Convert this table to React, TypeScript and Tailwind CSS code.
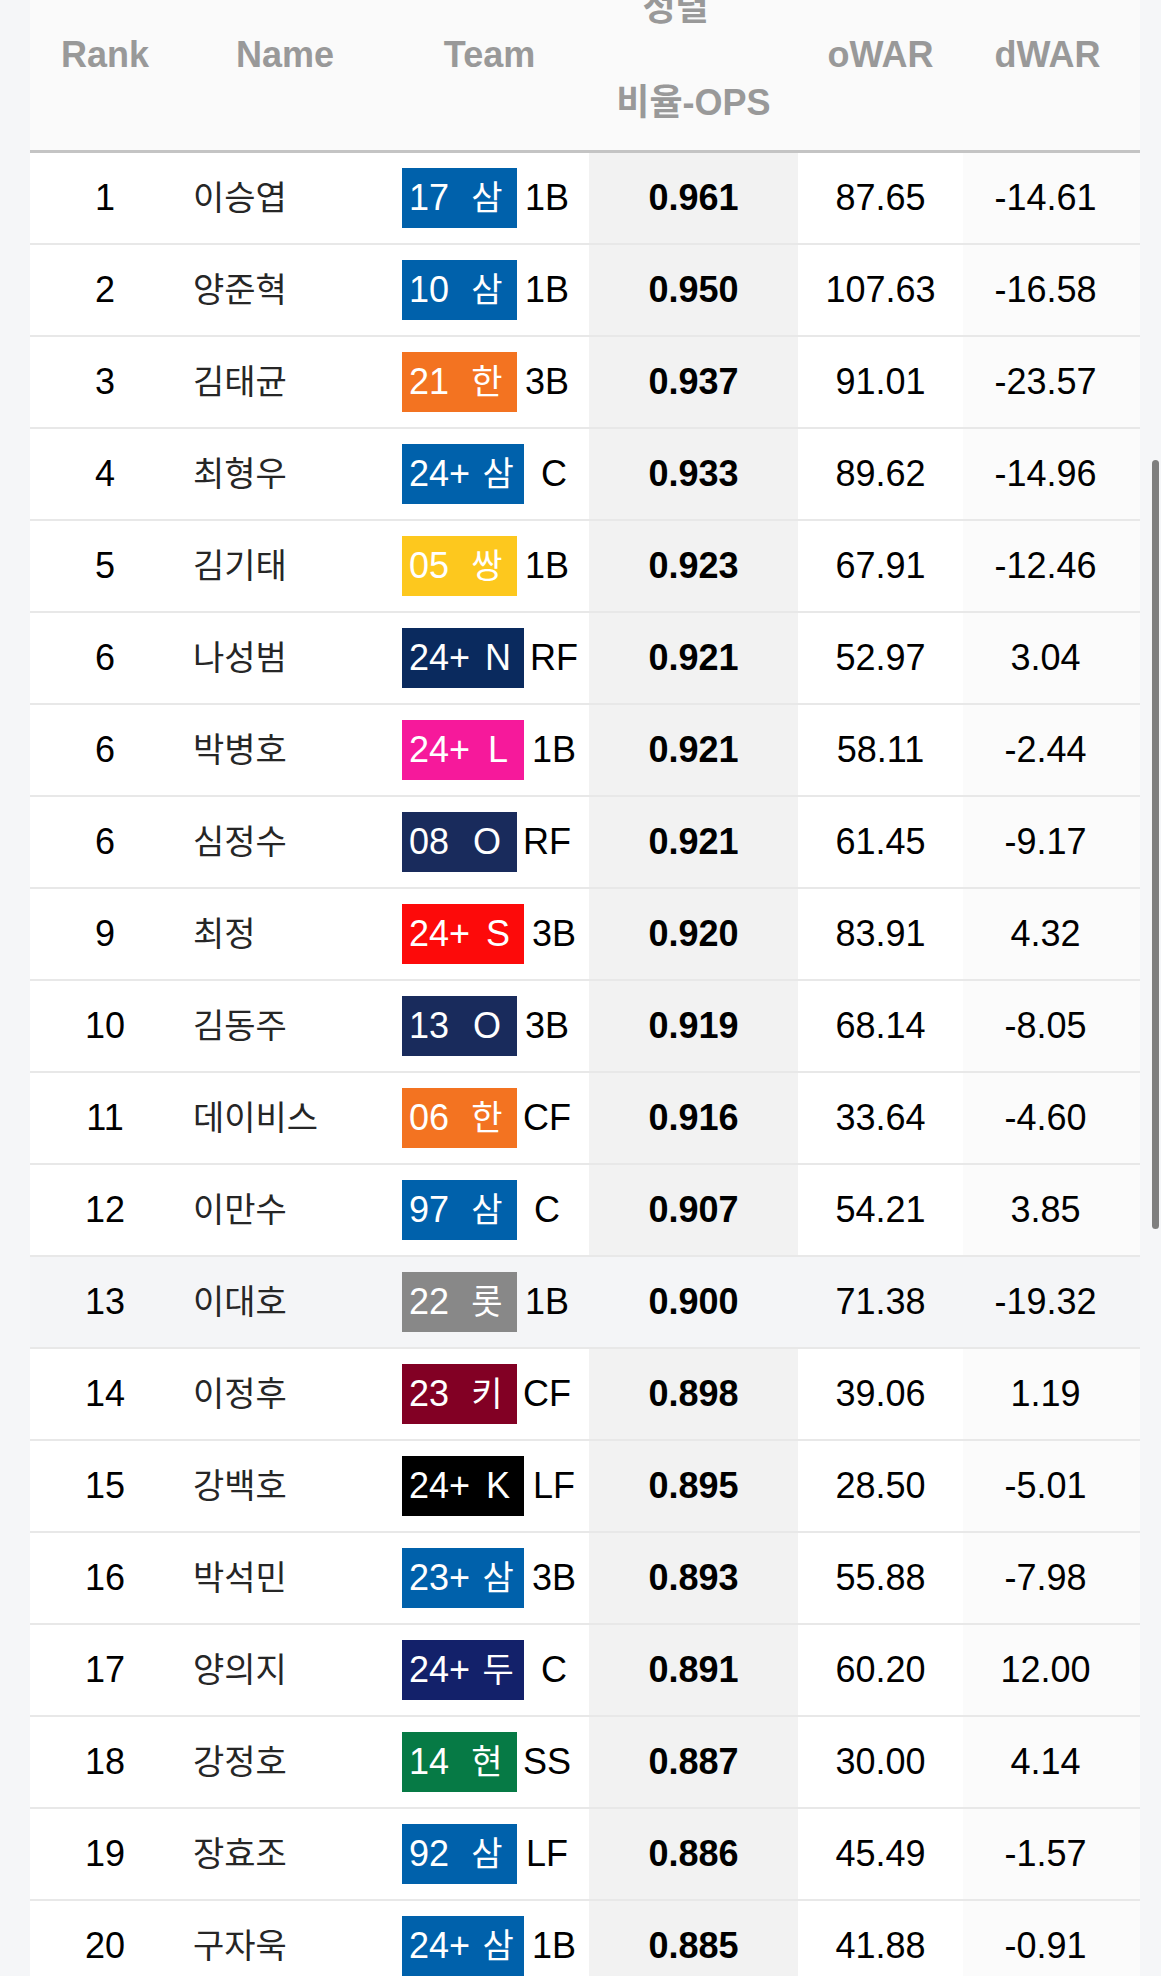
import React from 'react'

type Row = {
  rank: number
  name: string
  year: string
  team: string
  color: string
  pos: string
  ops: string
  owar: string
  dwar: string
  hover?: boolean
}

const SAM = 'bg-[#0061ab]'
const HAN = 'bg-[#f37321]'

const rows: Row[] = [
  { rank: 1, name: '이승엽', year: '17', team: '삼', color: SAM, pos: '1B', ops: '0.961', owar: '87.65', dwar: '-14.61' },
  { rank: 2, name: '양준혁', year: '10', team: '삼', color: SAM, pos: '1B', ops: '0.950', owar: '107.63', dwar: '-16.58' },
  { rank: 3, name: '김태균', year: '21', team: '한', color: HAN, pos: '3B', ops: '0.937', owar: '91.01', dwar: '-23.57' },
  { rank: 4, name: '최형우', year: '24+', team: '삼', color: SAM, pos: 'C', ops: '0.933', owar: '89.62', dwar: '-14.96' },
  { rank: 5, name: '김기태', year: '05', team: '쌍', color: 'bg-[#fdc81e]', pos: '1B', ops: '0.923', owar: '67.91', dwar: '-12.46' },
  { rank: 6, name: '나성범', year: '24+', team: 'N', color: 'bg-[#0a2a5e]', pos: 'RF', ops: '0.921', owar: '52.97', dwar: '3.04' },
  { rank: 6, name: '박병호', year: '24+', team: 'L', color: 'bg-[#f6199b]', pos: '1B', ops: '0.921', owar: '58.11', dwar: '-2.44' },
  { rank: 6, name: '심정수', year: '08', team: 'O', color: 'bg-[#192b5c]', pos: 'RF', ops: '0.921', owar: '61.45', dwar: '-9.17' },
  { rank: 9, name: '최정', year: '24+', team: 'S', color: 'bg-[#fd0a0a]', pos: '3B', ops: '0.920', owar: '83.91', dwar: '4.32' },
  { rank: 10, name: '김동주', year: '13', team: 'O', color: 'bg-[#192b5c]', pos: '3B', ops: '0.919', owar: '68.14', dwar: '-8.05' },
  { rank: 11, name: '데이비스', year: '06', team: '한', color: HAN, pos: 'CF', ops: '0.916', owar: '33.64', dwar: '-4.60' },
  { rank: 12, name: '이만수', year: '97', team: '삼', color: SAM, pos: 'C', ops: '0.907', owar: '54.21', dwar: '3.85' },
  { rank: 13, name: '이대호', year: '22', team: '롯', color: 'bg-[#888888]', pos: '1B', ops: '0.900', owar: '71.38', dwar: '-19.32', hover: true },
  { rank: 14, name: '이정후', year: '23', team: '키', color: 'bg-[#820024]', pos: 'CF', ops: '0.898', owar: '39.06', dwar: '1.19' },
  { rank: 15, name: '강백호', year: '24+', team: 'K', color: 'bg-black', pos: 'LF', ops: '0.895', owar: '28.50', dwar: '-5.01' },
  { rank: 16, name: '박석민', year: '23+', team: '삼', color: SAM, pos: '3B', ops: '0.893', owar: '55.88', dwar: '-7.98' },
  { rank: 17, name: '양의지', year: '24+', team: '두', color: 'bg-[#13216a]', pos: 'C', ops: '0.891', owar: '60.20', dwar: '12.00' },
  { rank: 18, name: '강정호', year: '14', team: '현', color: 'bg-[#067a45]', pos: 'SS', ops: '0.887', owar: '30.00', dwar: '4.14' },
  { rank: 19, name: '장효조', year: '92', team: '삼', color: SAM, pos: 'LF', ops: '0.886', owar: '45.49', dwar: '-1.57' },
  { rank: 20, name: '구자욱', year: '24+', team: '삼', color: SAM, pos: '1B', ops: '0.885', owar: '41.88', dwar: '-0.91' },
]

const cols = 'grid grid-cols-[150px_210px_199px_209px_165px_177px]'

const TeamBadge: React.FC<{ row: Row }> = ({ row }) => {
  const korean = /[가-힣]/.test(row.team)
  return (
    <span className={`${row.color} flex h-[60px] min-w-[115px] items-center pl-[7px] pr-[8px] text-white`}>
      <span className="min-w-[50px]">{row.year}</span>
      <span className={`ml-[10px] w-[36px] text-center ${korean ? 'text-[34px]' : ''}`}>{row.team}</span>
    </span>
  )
}

export default function App() {
  return (
    <div
      className="min-h-screen overflow-hidden bg-[#f5f6f8] pl-[30px]"
      style={{ fontFamily: '"Liberation Sans", "Noto Sans CJK KR", sans-serif' }}
    >
      <div className="-mt-[40px] w-[1110px] bg-white text-[36px] text-black">
        {/* Header */}
        <div className={`${cols} h-[193px] items-center border-b-[3px] border-[#c4c4c4] bg-[#fafafa] font-bold text-[#999999]`}>
          <div className="text-center">Rank</div>
          <div className="text-center">Name</div>
          <div className="text-center">Team</div>
          <div className="flex flex-col items-center gap-[54px] leading-[41px]">
            <span className="pr-9">정렬</span>
            <span>비율-OPS</span>
          </div>
          <div className="text-center">oWAR</div>
          <div className="pr-[8px] text-center">dWAR</div>
        </div>

        {/* Rows */}
        {rows.map((row, i) => (
          <div
            key={i}
            className={`${cols} h-[92px] items-stretch border-b-2 border-[#e8e8e8] ${row.hover ? 'bg-[#f4f5f7]' : ''}`}
          >
            <div className="flex items-center justify-center">{row.rank}</div>
            <div className="flex items-center pl-[13px] text-[34px] text-[#262626]">{row.name}</div>
            <div className="flex items-center pl-[12px]">
              <TeamBadge row={row} />
              <span className="ml-[5px] w-[50px] text-center">{row.pos}</span>
            </div>
            <div className={`flex items-center justify-center font-bold ${row.hover ? '' : 'bg-[#f2f2f2]'}`}>
              {row.ops}
            </div>
            <div className="flex items-center justify-center">{row.owar}</div>
            <div className={`flex items-center justify-center pr-[12px] ${row.hover ? '' : 'bg-[#fbfbfb]'}`}>
              {row.dwar}
            </div>
          </div>
        ))}
      </div>

      {/* overlay scrollbar */}
      <div className="fixed right-[2px] top-[460px] h-[769px] w-[7px] rounded-full bg-[#7f7f7f]" />
    </div>
  )
}
